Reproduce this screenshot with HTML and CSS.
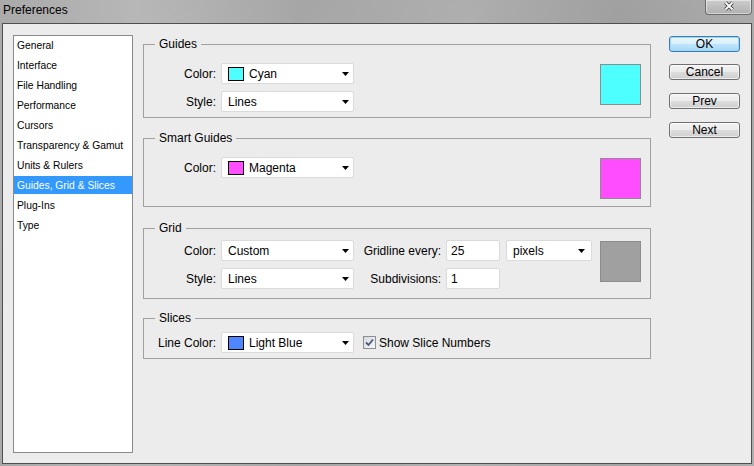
FILE: index.html
```html
<!DOCTYPE html>
<html>
<head>
<meta charset="utf-8">
<title>Preferences</title>
<link rel="stylesheet" href="styles.css">
</head>
<body>
<div class="window">
  <div class="titlebar">
    <span class="title">Preferences</span>
    <div class="close">
      <svg width="12" height="10" viewBox="0 0 12 10"><path d="M2.5 1.5 L9.5 8.5 M9.5 1.5 L2.5 8.5" stroke="#3a3a3a" stroke-width="3.6" fill="none"/><path d="M2.5 1.5 L9.5 8.5 M9.5 1.5 L2.5 8.5" stroke="#ffffff" stroke-width="1.8" fill="none"/></svg>
    </div>
  </div>
  <div class="client">
    <ul class="cats">
      <li>General</li>
      <li>Interface</li>
      <li>File Handling</li>
      <li>Performance</li>
      <li>Cursors</li>
      <li>Transparency &amp; Gamut</li>
      <li>Units &amp; Rulers</li>
      <li class="sel">Guides, Grid &amp; Slices</li>
      <li>Plug-Ins</li>
      <li>Type</li>
    </ul>

    <div class="panel">
      <fieldset class="group g-guides">
        <legend>Guides</legend>
        <div class="gbody">
          <div class="rows">
            <div class="row">
              <span class="lbl">Color:</span>
              <div class="select"><span class="chip cyan"></span><span>Cyan</span><svg class="arrow" width="7" height="4" viewBox="0 0 7 4"><path d="M0 0H7L3.5 4Z" fill="#000"/></svg></div>
            </div>
            <div class="row">
              <span class="lbl">Style:</span>
              <div class="select"><span>Lines</span><svg class="arrow" width="7" height="4" viewBox="0 0 7 4"><path d="M0 0H7L3.5 4Z" fill="#000"/></svg></div>
            </div>
          </div>
          <div class="swatch cyan"></div>
        </div>
      </fieldset>

      <fieldset class="group g-smart">
        <legend>Smart Guides</legend>
        <div class="gbody">
          <div class="rows">
            <div class="row">
              <span class="lbl">Color:</span>
              <div class="select"><span class="chip magenta"></span><span>Magenta</span><svg class="arrow" width="7" height="4" viewBox="0 0 7 4"><path d="M0 0H7L3.5 4Z" fill="#000"/></svg></div>
            </div>
          </div>
          <div class="swatch magenta"></div>
        </div>
      </fieldset>

      <fieldset class="group g-grid">
        <legend>Grid</legend>
        <div class="gbody">
          <div class="rows">
            <div class="row">
              <span class="lbl">Color:</span>
              <div class="select"><span>Custom</span><svg class="arrow" width="7" height="4" viewBox="0 0 7 4"><path d="M0 0H7L3.5 4Z" fill="#000"/></svg></div>
              <span class="lbl2">Gridline every:</span>
              <div class="input">25</div>
              <div class="select pixels"><span>pixels</span><svg class="arrow" width="7" height="4" viewBox="0 0 7 4"><path d="M0 0H7L3.5 4Z" fill="#000"/></svg></div>
            </div>
            <div class="row">
              <span class="lbl">Style:</span>
              <div class="select"><span>Lines</span><svg class="arrow" width="7" height="4" viewBox="0 0 7 4"><path d="M0 0H7L3.5 4Z" fill="#000"/></svg></div>
              <span class="lbl2">Subdivisions:</span>
              <div class="input">1</div>
            </div>
          </div>
          <div class="swatch gray"></div>
        </div>
      </fieldset>

      <fieldset class="group g-slices">
        <legend>Slices</legend>
        <div class="gbody">
          <div class="rows">
            <div class="row">
              <span class="lbl">Line Color:</span>
              <div class="select"><span class="chip blue"></span><span>Light Blue</span><svg class="arrow" width="7" height="4" viewBox="0 0 7 4"><path d="M0 0H7L3.5 4Z" fill="#000"/></svg></div>
              <label class="check">
                <span class="cbox"><svg width="11" height="11" viewBox="0 0 11 11"><path d="M2 5.5 L4.5 8 L9 2.5" stroke="#4d5a73" stroke-width="1.8" fill="none"/></svg></span>
                <span>Show Slice Numbers</span>
              </label>
            </div>
          </div>
        </div>
      </fieldset>
    </div>

    <div class="buttons">
      <div class="btn ok">OK</div>
      <div class="btn b-cancel">Cancel</div>
      <div class="btn b-next">Prev</div>
      <div class="btn b-next">Next</div>
    </div>
  </div>
</div>
</body>
</html>
```

FILE: styles.css
```css
* { box-sizing: border-box; }
html, body { margin: 0; padding: 0; }
body {
  width: 754px;
  height: 466px;
  overflow: hidden;
  font-family: "Liberation Sans", Arial, sans-serif;
  background: #acacac;
}
.window {
  width: 754px;
  height: 466px;
  display: flex;
  flex-direction: column;
  background:
    radial-gradient(ellipse at 30% 40%, rgba(255,255,255,0.08), transparent 60%),
    radial-gradient(ellipse at 75% 30%, rgba(0,0,0,0.05), transparent 55%),
    linear-gradient(90deg, #a9a9a9 0%, #b6b6b6 18%, #a6a6a6 40%, #b2b2b2 62%, #a4a4a4 82%, #aeaeae 100%);
}
.titlebar {
  height: 23px;
  display: flex;
  align-items: flex-start;
}
.title {
  font-size: 12px;
  line-height: 14px;
  padding: 3px 0 0 3px;
  color: #000;
}
.close {
  margin-left: auto;
  margin-right: 2px;
  width: 47px;
  height: 15px;
  border: 1px solid #6b6b6b;
  border-top: none;
  border-radius: 0 0 4px 4px;
  background: linear-gradient(#cdcdcd, #b0b0b0);
  box-shadow: inset 0 0 0 1px rgba(255,255,255,0.45);
  display: flex;
  justify-content: center;
  padding-top: 1px;
}
.client {
  margin: 0 2px;
  height: 441px;
  border: 1px solid #4f4f4f;
  background: #ececec;
  display: flex;
  align-items: flex-start;
  padding: 11px 0 10px 10px;
}
.cats {
  list-style: none;
  margin: 0;
  padding: 0;
  width: 120px;
  height: 418px;
  border: 1px solid #8a8a8a;
  background: #fff;
  font-size: 10.3px;
}
.cats li {
  height: 18px;
  line-height: 18px;
  padding-left: 3px;
  padding-top: 1px;
  margin-bottom: 2px;
  color: #000;
  white-space: nowrap;
}
.cats li.sel {
  background: #3399ff;
  color: #fff;
}
.panel {
  width: 508px;
  margin-left: 10px;
  margin-top: 3px;
  display: flex;
  flex-direction: column;
}
.group {
  margin: 0;
  padding: 0;
  min-width: 0;
  border: 1px solid #a0a0a0;
}
.group legend {
  margin-left: 11px;
  padding: 0 4px;
  font-size: 12px;
  line-height: 13px;
  color: #000;
}
.gbody {
  display: flex;
  align-items: flex-start;
  padding-right: 9px;
}
.g-guides .gbody { padding-top: 12px; padding-bottom: 5px; }
.g-smart { margin-top: 14px; }
.g-smart .gbody { padding-top: 12px; padding-bottom: 7px; }
.g-grid { margin-top: 15px; }
.g-grid .gbody { padding-top: 5px; padding-bottom: 9px; }
.g-slices { margin-top: 13px; }
.g-slices .gbody { padding-top: 7px; padding-bottom: 5px; }
.rows {
  display: flex;
  flex-direction: column;
  gap: 7px;
}
.row {
  display: flex;
  align-items: center;
  height: 21px;
  font-size: 12px;
  color: #000;
}
.lbl {
  width: 72px;
  text-align: right;
  margin-right: 5px;
  white-space: nowrap;
  padding-top: 1px;
}
.lbl2 {
  width: 87px;
  text-align: right;
  margin-right: 5px;
  white-space: nowrap;
  padding-top: 1px;
}
.select {
  width: 133px;
  height: 21px;
  border: 1px solid #dadada;
  border-radius: 2px;
  background: #fff;
  display: flex;
  align-items: center;
  padding: 1px 4px 0 6px;
  white-space: nowrap;
}
.select.pixels {
  width: 86px;
  margin-left: 6px;
  padding-right: 6px;
}
.arrow { margin-left: auto; display: block; margin-bottom: 1px; }
.chip {
  width: 16px;
  height: 14px;
  border: 1px solid #000;
  margin-right: 5px;
  flex: none;
  margin-bottom: 1px;
}
.input {
  width: 54px;
  height: 21px;
  border: 1px solid #dadada;
  border-radius: 2px;
  background: #fff;
  padding-left: 4px;
  line-height: 20px;
}
.swatch {
  width: 41px;
  height: 41px;
  border: 1px solid #8c8c8c;
  margin-left: auto;
  margin-top: 1px;
  flex: none;
}
.cyan { background: #4dffff; }
.magenta { background: #ff4dff; }
.blue { background: #4d86ff; }
.gray { background: #a0a0a0; }
.check {
  margin-left: 9px;
  display: flex;
  align-items: center;
  white-space: nowrap;
}
.cbox {
  width: 13px;
  height: 13px;
  border: 1px solid #8e8f8f;
  background: linear-gradient(135deg, #d6dbe3, #f4f6f9);
  margin-right: 3px;
  display: flex;
  align-items: center;
  justify-content: center;
}
.buttons {
  margin-left: 18px;
  margin-top: 1px;
  width: 71px;
  display: flex;
  flex-direction: column;
}
.btn {
  height: 16px;
  border: 1px solid #707070;
  border-radius: 3px;
  background: linear-gradient(#f3f3f3 0%, #ebebeb 50%, #dddddd 50%, #cfcfcf 100%);
  box-shadow: inset 0 0 0 1px rgba(255,255,255,0.6);
  font-size: 12px;
  line-height: 14px;
  text-align: center;
  color: #000;
}
.btn.ok {
  border-color: #3c7fb1;
  background: linear-gradient(#eaf6fd 0%, #d9f0fc 50%, #bee6fd 50%, #a7d9f5 100%);
  box-shadow: inset 0 0 0 1px #9cd5f6;
}
.b-cancel { margin-top: 12px; }
.b-next { margin-top: 13px; }
```
